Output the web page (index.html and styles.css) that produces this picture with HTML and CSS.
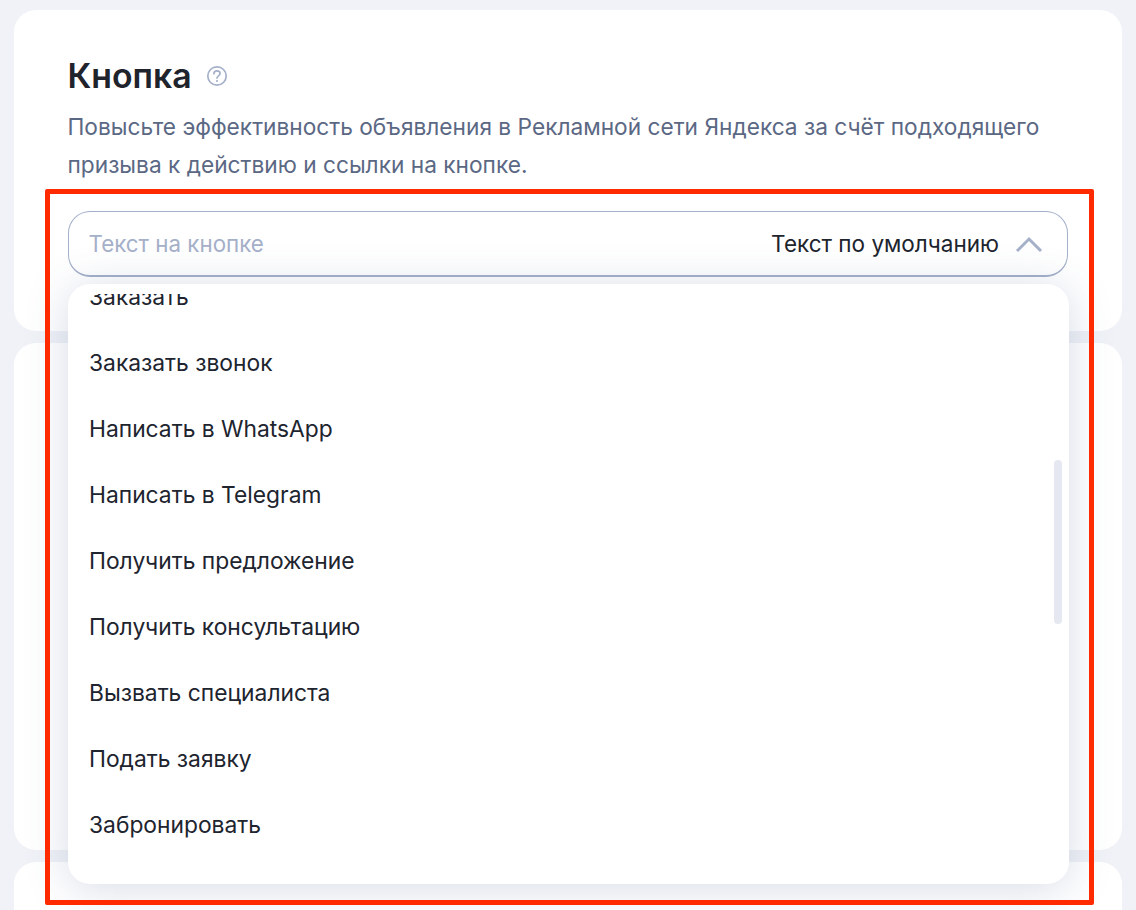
FILE: index.html
```html
<!DOCTYPE html>
<html lang="ru">
<head>
<meta charset="utf-8">
<title>Кнопка</title>
<link rel="stylesheet" href="styles.css">
</head>
<body>
<main class="page">
  <section class="card card-main">
    <div class="title-row">
      <h2 class="title">Кнопка</h2>
      <svg class="help" viewBox="0 0 22 22" width="22" height="22" aria-hidden="true">
        <circle cx="11" cy="11" r="9.2" fill="none" stroke="#a5b0c9" stroke-width="1.7"/>
        <path d="M7.9 8.7c0-1.8 1.4-2.9 3.1-2.9s3.1 1.1 3.1 2.7c0 2.4-3.1 2.3-3.1 4.6" fill="none" stroke="#a5b0c9" stroke-width="1.7" stroke-linecap="round"/>
        <circle cx="11" cy="16" r="1.1" fill="#a5b0c9"/>
      </svg>
    </div>
    <p class="desc">Повысьте эффективность объявления в Рекламной сети Яндекса за счёт подходящего призыва к действию и ссылки на кнопке.</p>
    <div class="select">
      <span class="placeholder">Текст на кнопке</span>
      <span class="value">Текст по умолчанию</span>
      <svg class="chevron" viewBox="0 0 28 18" width="28" height="18" aria-hidden="true">
        <path d="M2 16 14 4 26 16" fill="none" stroke="#a5b0c9" stroke-width="3"/>
      </svg>
    </div>
  </section>
  <section class="card card-second"></section>
  <section class="card card-third"></section>

  <div class="menu">
    <ul class="list">
      <li class="item">Заказать</li>
      <li class="item">Заказать звонок</li>
      <li class="item">Написать в WhatsApp</li>
      <li class="item">Написать в Telegram</li>
      <li class="item">Получить предложение</li>
      <li class="item">Получить консультацию</li>
      <li class="item">Вызвать специалиста</li>
      <li class="item">Подать заявку</li>
      <li class="item">Забронировать</li>
    </ul>
    <div class="thumb"></div>
  </div>
  <div class="frame"></div>
</main>
</body>
</html>
```

FILE: styles.css
```css
* { box-sizing: border-box; }
html, body { margin: 0; height: 100%; overflow: hidden; }
body {
  background: #f0f2f7;
  font-family: Inter, "Noto Sans", sans-serif;
  color: #20242e;
}
.page {
  position: relative;
  height: 910px;
  padding: 10px 14px 0;
  display: flex;
  flex-direction: column;
  gap: 12px;
  overflow: hidden;
}
.card {
  background: #fff;
  border-radius: 22px;
  flex: none;
}
.card-main { height: 321px; padding: 44px 53.5px 0; }
.card-second { height: 507px; }
.card-third { height: 100px; }
.title-row { display: flex; align-items: center; gap: 14px; height: 44px; }
.title { margin: 0; font-size: 33.8px; font-weight: 600; line-height: 44px; color: #1f232c; }
.desc {
  margin: 10px 0 0;
  font-size: 22.69px;
  line-height: 38px;
  color: #5b6884;
  width: 1000px;
}
.select {
  margin-top: 27px;
  height: 66px;
  width: 1000px;
  margin-left: 0.5px;
  border: 1.5px solid #a5b0c9;
  border-bottom-width: 2px;
  border-radius: 22px;
  padding: 0 24px 0 19.5px;
  display: flex;
  align-items: center;
  font-size: 22.5px;
  background: #fff;
}
.placeholder { color: #a5b0c9; flex: 1; font-size: 22.35px; }
.value { color: #20242e; margin-right: 16px; }
.menu {
  position: absolute;
  left: 68px;
  top: 284px;
  width: 1001px;
  height: 600px;
  padding: 10px 0;
  background: #fff;
  border-radius: 22px;
  box-shadow: 0 4px 44px rgba(70, 90, 140, 0.22);
}
.list {
  list-style: none;
  margin: 0;
  padding: 0 0 0 21px;
  height: 580px;
  overflow: hidden;
}
.item {
  height: 66px;
  line-height: 66px;
  font-size: 22.8px;
  color: #20242e;
}
.item:first-child { margin-top: -30px; }
.thumb {
  position: absolute;
  left: 986px;
  top: 176px;
  width: 8px;
  height: 164px;
  border-radius: 4px;
  background: #e5e8f1;
}
.frame {
  position: absolute;
  left: 45px;
  top: 189px;
  width: 1049px;
  height: 716px;
  border: 5.5px solid #ff2a00;
  border-radius: 2px;
  pointer-events: none;
}
```
